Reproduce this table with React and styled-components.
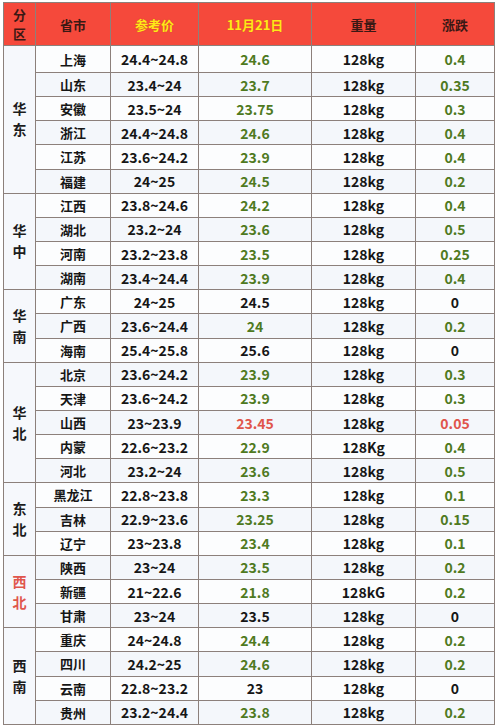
import React from 'react';
import styled, { createGlobalStyle } from 'styled-components';

const GlobalStyle = createGlobalStyle`
  html, body {
    margin: 0;
    padding: 0;
    background: #ffffff;
  }
  body {
    font-family: "Noto Sans CJK SC", "Noto Sans", sans-serif;
  }
`;

const regions = [
  {
    name: '华东',
    rows: [
      ['上海', '24.4~24.8', '24.6', '128kg', '0.4'],
      ['山东', '23.4~24', '23.7', '128kg', '0.35'],
      ['安徽', '23.5~24', '23.75', '128kg', '0.3'],
      ['浙江', '24.4~24.8', '24.6', '128kg', '0.4'],
      ['江苏', '23.6~24.2', '23.9', '128kg', '0.4'],
      ['福建', '24~25', '24.5', '128kg', '0.2'],
    ],
  },
  {
    name: '华中',
    rows: [
      ['江西', '23.8~24.6', '24.2', '128kg', '0.4'],
      ['湖北', '23.2~24', '23.6', '128kg', '0.5'],
      ['河南', '23.2~23.8', '23.5', '128kg', '0.25'],
      ['湖南', '23.4~24.4', '23.9', '128kg', '0.4'],
    ],
  },
  {
    name: '华南',
    rows: [
      ['广东', '24~25', '24.5', '128kg', '0', 'flat'],
      ['广西', '23.6~24.4', '24', '128kg', '0.2'],
      ['海南', '25.4~25.8', '25.6', '128kg', '0', 'flat'],
    ],
  },
  {
    name: '华北',
    rows: [
      ['北京', '23.6~24.2', '23.9', '128kg', '0.3'],
      ['天津', '23.6~24.2', '23.9', '128kg', '0.3'],
      ['山西', '23~23.9', '23.45', '128kg', '0.05', 'down'],
      ['内蒙', '22.6~23.2', '22.9', '128Kg', '0.4'],
      ['河北', '23.2~24', '23.6', '128kg', '0.5'],
    ],
  },
  {
    name: '东北',
    rows: [
      ['黑龙江', '22.8~23.8', '23.3', '128kg', '0.1'],
      ['吉林', '22.9~23.6', '23.25', '128kg', '0.15'],
      ['辽宁', '23~23.8', '23.4', '128kg', '0.1'],
    ],
  },
  {
    name: '西北',
    red: true,
    rows: [
      ['陕西', '23~24', '23.5', '128kg', '0.2'],
      ['新疆', '21~22.6', '21.8', '128kG', '0.2'],
      ['甘肃', '23~24', '23.5', '128kg', '0', 'flat'],
    ],
  },
  {
    name: '西南',
    rows: [
      ['重庆', '24~24.8', '24.4', '128kg', '0.2'],
      ['四川', '24.2~25', '24.6', '128kg', '0.2'],
      ['云南', '22.8~23.2', '23', '128kg', '0', 'flat'],
      ['贵州', '23.2~24.4', '23.8', '128kg', '0.2'],
    ],
  },
];

const toneColor = {
  up: '#4f7a1f',
  down: '#e0554b',
  flat: '#161616',
};

const Page = styled.div`
  padding: 2px 0 0 3px;
`;

const Grid = styled.div`
  display: grid;
  width: 492px;
  box-sizing: border-box;
  grid-template-columns: 31px 74px 87px 112px 103px 78px;
  grid-template-rows: 42px 26px repeat(27, 23.15px);
  gap: 1px;
  padding: 1px;
  background: #8c807b;
`;

const HeadCell = styled.div`
  display: flex;
  align-items: center;
  justify-content: center;
  text-align: center;
  background: #f5493b;
  color: ${(p) => (p.$accent ? '#ffe818' : '#3a1814')};
  font-size: 13px;
  font-weight: 700;
  line-height: 19px;
  text-shadow: ${(p) => (p.$accent ? '0 0 1px rgba(160, 90, 0, 0.5)' : 'none')};
`;

const RegionCell = styled.div`
  grid-column: 1;
  grid-row: span ${(p) => p.$span};
  display: flex;
  align-items: center;
  justify-content: center;
  background: #f6f8fc;
  color: ${(p) => (p.$red ? '#e0564c' : '#1c1c1c')};
  font-size: 14px;
  font-weight: 700;
  line-height: 21px;
  text-align: center;
`;

const Cell = styled.div`
  display: flex;
  align-items: center;
  justify-content: center;
  background: ${(p) => (p.$odd ? '#f4f7fb' : '#fcfdfe')};
  color: ${(p) => p.$color || '#161616'};
  font-size: ${(p) => (p.$cjk ? '13px' : '14px')};
  font-weight: 700;
  white-space: nowrap;
`;

const App = () => {
  let index = 0;
  return (
    <Page>
      <GlobalStyle />
      <Grid>
        <HeadCell>
          分<br />区
        </HeadCell>
        <HeadCell>省市</HeadCell>
        <HeadCell $accent>参考价</HeadCell>
        <HeadCell $accent>11月21日</HeadCell>
        <HeadCell>重量</HeadCell>
        <HeadCell>涨跌</HeadCell>

        {regions.map((region) => (
          <React.Fragment key={region.name}>
            <RegionCell $span={region.rows.length} $red={region.red}>
              {region.name[0]}
              <br />
              {region.name[1]}
            </RegionCell>
            {region.rows.map(([city, range, price, weight, change, tone = 'up']) => {
              const odd = index++ % 2 === 1;
              const color = toneColor[tone];
              const priceColor =
                tone === 'flat' && price !== '24' ? toneColor.flat : color;
              return (
                <React.Fragment key={city}>
                  <Cell $odd={odd} $cjk>{city}</Cell>
                  <Cell $odd={odd}>{range}</Cell>
                  <Cell $odd={odd} $color={priceColor}>{price}</Cell>
                  <Cell $odd={odd}>{weight}</Cell>
                  <Cell $odd={odd} $color={color}>{change}</Cell>
                </React.Fragment>
              );
            })}
          </React.Fragment>
        ))}
      </Grid>
    </Page>
  );
};

export default App;
